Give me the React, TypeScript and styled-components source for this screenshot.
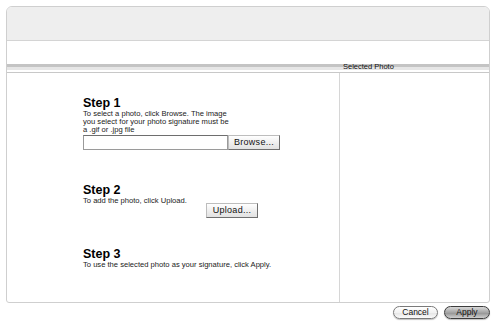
import styled, { createGlobalStyle } from "styled-components";

const GlobalStyle = createGlobalStyle`
  html, body {
    margin: 0;
    padding: 0;
    background: #ffffff;
  }
  body {
    font-family: "Liberation Sans", Arial, sans-serif;
    color: #111111;
  }
`;

const Page = styled.div`
  width: 500px;
  height: 328px;
  padding: 6px 10px 0 6px;
  box-sizing: border-box;
  display: flex;
  flex-direction: column;
`;

const Panel = styled.div`
  height: 297px;
  border: 1px solid #cfcfcf;
  border-radius: 6px 6px 3px 3px;
  display: flex;
  flex-direction: column;
  overflow: hidden;
  box-sizing: border-box;
`;

const TopBand = styled.div`
  height: 33px;
  background: #eeeeee;
  border-bottom: 1px solid #d4d4d4;
`;

const WhiteBand = styled.div`
  height: 23px;
  background: #ffffff;
`;

const ColumnHeads = styled.div`
  display: grid;
  grid-template-columns: 333px 1fr;
  height: 8px;
  background: linear-gradient(#c4c4c4 0, #c4c4c4 3px, #e6e6e6 3px, #e6e6e6 6px, #ffffff 6px);
  border-bottom: 1px solid #c8c8c8;
`;

const HeadCell = styled.div`
  font-size: 7.5px;
  line-height: 8px;
  color: #111111;
  padding-left: 3px;
  margin-top: -1px;
  white-space: nowrap;
`;

const Body = styled.div`
  flex: 1;
  display: grid;
  grid-template-columns: 333px 1fr;
`;

const Steps = styled.div`
  border-right: 1px solid #d6d6d6;
  padding: 23px 0 0 76px;
  display: flex;
  flex-direction: column;
`;

const Side = styled.div``;

const Step = styled.section<{ $height: number }>`
  height: ${(p) => p.$height}px;
  display: flex;
  flex-direction: column;
`;

const StepTitle = styled.h2`
  margin: 0;
  font-family: "Liberation Sans", Arial, sans-serif;
  font-size: 12.5px;
  font-weight: bold;
  line-height: 14px;
  color: #000000;
`;

const StepText = styled.p<{ $width?: number }>`
  margin: 0;
  font-size: 7.6px;
  line-height: 8px;
  color: #222222;
  width: ${(p) => (p.$width ? `${p.$width}px` : "auto")};
`;

const ButtonRow = styled.div<{ $shift?: number }>`
  display: flex;
  align-items: flex-start;
  margin-top: ${(p) => p.$shift ?? 1}px;
`;

const FileInput = styled.div`
  width: 145px;
  height: 15px;
  box-sizing: border-box;
  border: 1px solid #9a9a9a;
  border-top-color: #6e6e6e;
  background: #ffffff;
`;

const PushButton = styled.button<{ $offset?: number }>`
  margin-left: ${(p) => p.$offset ?? 0}px;
  height: 15px;
  width: 52px;
  padding: 0;
  font-family: "Liberation Sans", Arial, sans-serif;
  font-size: 9px;
  letter-spacing: 0.3px;
  color: #111111;
  background: linear-gradient(#ffffff, #ececec 60%, #e2e2e2);
  border: 1px solid #bdbdbd;
  border-right-color: #6f6f6f;
  border-bottom-color: #6f6f6f;
  border-radius: 0;
  line-height: 13px;
`;

const Footer = styled.div`
  display: flex;
  justify-content: flex-end;
  gap: 6px;
  padding-top: 3px;
`;

const AquaButton = styled.button<{ $primary?: boolean }>`
  height: 13px;
  min-width: ${(p) => (p.$primary ? 46 : 45)}px;
  padding: 0 8px;
  border-radius: 7px;
  font-family: "Liberation Sans", Arial, sans-serif;
  font-size: 8.5px;
  line-height: 11px;
  color: #111111;
  border: 1px solid ${(p) => (p.$primary ? "#3c3c3c" : "#7a7a7a")};
  background: ${(p) =>
    p.$primary
      ? "linear-gradient(#d8d8d8, #a4a4a4 50%, #909090 51%, #cfcfcf)"
      : "linear-gradient(#ffffff, #f2f2f2 50%, #e4e4e4 51%, #fbfbfb)"};
  box-shadow: 0 1px 1px rgba(0, 0, 0, 0.25);
`;

export default function App() {
  return (
    <>
      <GlobalStyle />
      <Page>
        <Panel>
          <TopBand />
          <WhiteBand />
          <ColumnHeads>
            <HeadCell />
            <HeadCell>Selected Photo</HeadCell>
          </ColumnHeads>
          <Body>
            <Steps>
              <Step $height={87}>
                <StepTitle>Step 1</StepTitle>
                <StepText $width={150}>
                  To select a photo, click Browse. The image you select for
                  your photo signature must be a .gif or .jpg file
                </StepText>
                <ButtonRow>
                  <FileInput />
                  <PushButton>Browse...</PushButton>
                </ButtonRow>
              </Step>
              <Step $height={64}>
                <StepTitle>Step 2</StepTitle>
                <StepText>To add the photo, click Upload.</StepText>
                <ButtonRow $shift={-2}>
                  <PushButton $offset={123}>Upload...</PushButton>
                </ButtonRow>
              </Step>
              <Step $height={40}>
                <StepTitle>Step 3</StepTitle>
                <StepText>
                  To use the selected photo as your signature, click Apply.
                </StepText>
              </Step>
            </Steps>
            <Side />
          </Body>
        </Panel>
        <Footer>
          <AquaButton>Cancel</AquaButton>
          <AquaButton $primary>Apply</AquaButton>
        </Footer>
      </Page>
    </>
  );
}
